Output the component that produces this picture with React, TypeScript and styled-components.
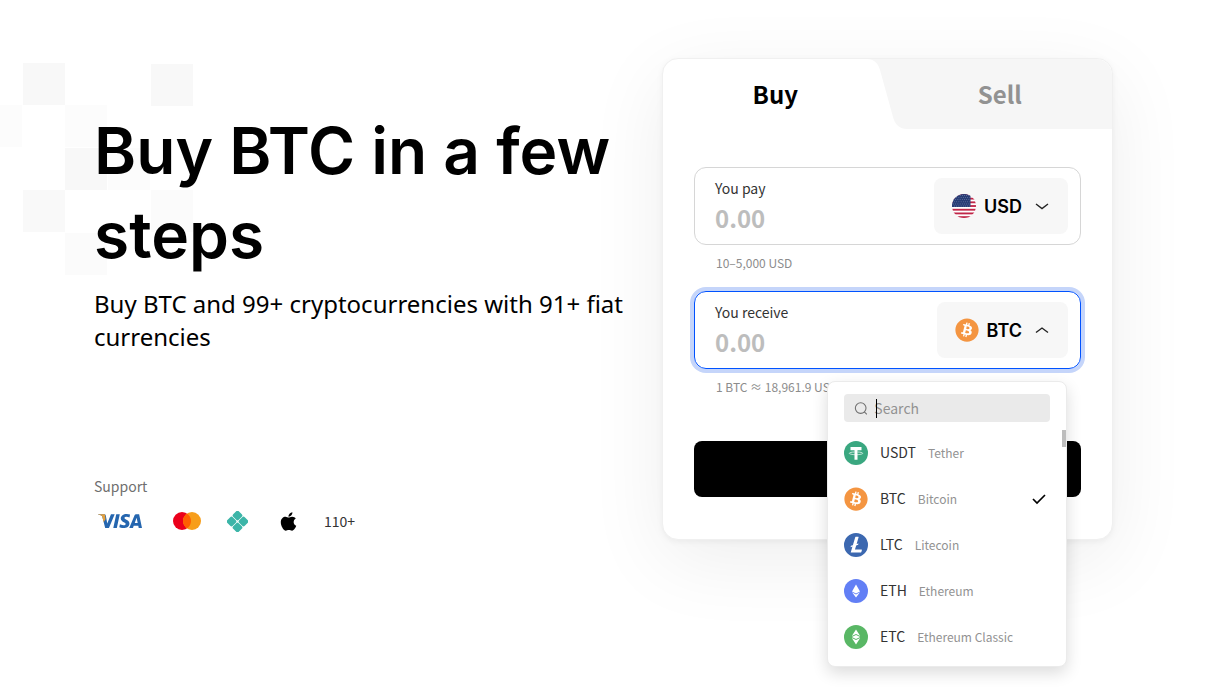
import React from 'react';
import styled, { createGlobalStyle, css } from 'styled-components';
import { SiVisa, SiLitecoin } from 'react-icons/si';
import { FaApple, FaBitcoin } from 'react-icons/fa';

const textFont = '"Noto Sans CJK SC", "Noto Sans", sans-serif';
const displayFont = 'Inter, "Noto Sans", sans-serif';

const GlobalStyle = createGlobalStyle`
  *, *::before, *::after { box-sizing: border-box; }
  body { margin: 0; background: #fff; color: #000; font-family: ${textFont}; }
  h1, p, ul { margin: 0; padding: 0; }
  button, input { font: inherit; border: 0; }
`;

const Page = styled.main`
  position: relative;
  display: grid;
  grid-template-columns: minmax(0, 1fr) minmax(0, 451px);
  gap: 32px;
  align-items: start;
  min-height: 100vh;
  padding: 58px 116px 20px 94px;
  overflow: hidden;
`;

const Pattern = styled.svg`
  position: absolute;
  left: 0;
  top: 63px;
`;

const Intro = styled.section`
  position: relative;
  padding-top: 51px;
`;

const Title = styled.h1`
  font-family: ${displayFont};
  font-size: 64px;
  font-weight: 600;
  line-height: 84px;
`;

const Lead = styled.p`
  margin-top: 10px;
  font-family: "Noto Sans", sans-serif;
  font-size: 24px;
  line-height: 33px;
`;

const SupportLabel = styled.p`
  margin-top: 123px;
  color: #6f6f6f;
  font-size: 14px;
  line-height: 20px;
`;

const Methods = styled.ul`
  display: flex;
  align-items: center;
  gap: 16px;
  height: 50px;
  list-style: none;
`;

const Method = styled.li<{ $wide?: boolean }>`
  display: flex;
  align-items: center;
  justify-content: ${p => (p.$wide ? 'flex-start' : 'center')};
  width: ${p => (p.$wide ? 59 : 35)}px;
  padding-left: ${p => (p.$wide ? 4 : 0)}px;
`;

const MoreMethods = styled.li`
  padding-left: 2px;
  color: #333;
  font-size: 14px;
`;

const VisaMark = styled.span`
  display: grid;
  color: #2566af;
  svg { grid-area: 1 / 1; }
  svg + svg { color: #e6a13c; clip-path: polygon(0 0, 13% 0, 17% 46%, 12% 54%, 0 48%); }
`;

const Card = styled.section`
  position: relative;
  border: 1px solid #f0f0f0;
  border-radius: 16px;
  background: #fff;
  box-shadow: 0 20px 80px rgba(0, 0, 0, 0.07), 0 2px 6px rgba(0, 0, 0, 0.05);
`;

const Tabs = styled.div`
  position: relative;
  display: grid;
  grid-template-columns: 1fr 1fr;
  height: 70px;
  border-radius: 16px 16px 0 0;
  overflow: hidden;
`;

const TabShape = styled.svg`
  position: absolute;
  right: 0;
  top: 0;
`;

const Tab = styled.button`
  position: relative;
  padding: 0;
  background: none;
  color: #929292;
  font-size: 24px;
  font-weight: 700;
  line-height: 32px;
  &[aria-selected='true'] { color: #000; }
`;

const Form = styled.form`
  padding: 38px 31px 42px;
`;

const FieldBox = styled.div<{ $active?: boolean }>`
  position: relative;
  display: flex;
  justify-content: space-between;
  height: 78px;
  padding: 10px 12px 10px 20px;
  border: 1px solid #d6d6d6;
  border-radius: 12px;
  ${p => p.$active && css`
    border-color: #0052ff;
    box-shadow: 0 0 0 4px #c5d5fa;
  `}
`;

const Amount = styled.label`
  display: flex;
  flex: 1;
  flex-direction: column;
  gap: 2px;
  min-width: 0;
  color: #333;
  font-size: 14px;
  line-height: 20px;
`;

const AmountInput = styled.input`
  width: 100%;
  height: 36px;
  padding: 0;
  outline: none;
  background: none;
  font-size: 24px !important;
  font-weight: 700 !important;
  &::placeholder { color: #bdbdbd; opacity: 1; }
`;

const CurrencyButton = styled.button`
  display: flex;
  align-items: center;
  gap: 8px;
  padding: 0 18px;
  border-radius: 8px;
  background: #f7f7f7;
  color: #000;
  font-family: ${displayFont};
  font-size: 18px;
  font-weight: 600;
  > svg:last-child { margin-left: 4px; }
`;

const Hint = styled.p`
  padding: 8px 22px 18px;
  color: #8c8c8c;
  font-size: 12px;
  line-height: 20px;
`;

const Submit = styled.button`
  display: block;
  width: 100%;
  height: 56px;
  margin-top: 26px;
  border-radius: 8px;
  background: #000;
`;

const Menu = styled.div`
  position: absolute;
  z-index: 2;
  top: 89px;
  right: 13px;
  width: 240px;
  padding: 12px 0 6px;
  border: 1px solid #ebebeb;
  border-radius: 8px;
  background: #fff;
  box-shadow: 0 6px 16px rgba(0, 0, 0, 0.14);
`;

const SearchBox = styled.label`
  position: relative;
  display: flex;
  align-items: center;
  gap: 7px;
  height: 28px;
  margin: 0 16px 8px;
  padding: 0 10px;
  border-radius: 4px;
  background: #eaeaea;
  color: #6f6f6f;
`;

const SearchInput = styled.input`
  width: 100%;
  padding: 0;
  outline: none;
  background: none;
  font-size: 14px !important;
  &::placeholder { color: #929292; opacity: 1; }
`;

const Caret = styled.span`
  position: absolute;
  left: 32px;
  top: 5px;
  width: 1px;
  height: 19px;
  background: #000;
`;

const Options = styled.ul`
  position: relative;
  list-style: none;
`;

const ScrollThumb = styled.span`
  position: absolute;
  top: 0;
  right: 0;
  width: 4px;
  height: 17px;
  background: #bdbdbd;
`;

const Option = styled.li`
  display: flex;
  align-items: center;
  gap: 12px;
  height: 46px;
  padding: 0 20px 0 16px;
`;

const Code = styled.span`
  padding-bottom: 2px;
  color: #333;
  font-size: 14px;
`;

const Name = styled.span`
  flex: 1;
  padding-bottom: 2px;
  color: #929292;
  font-size: 12px;
`;

const CoinDisc = styled.span<{ $color: string }>`
  display: flex;
  border-radius: 50%;
  background: radial-gradient(circle, #fff 9px, transparent 10px);
  color: ${p => p.$color};
`;

const Bitcoin = () => <CoinDisc $color="#f49541"><FaBitcoin size={24} /></CoinDisc>;
const Litecoin = () => <CoinDisc $color="#3c68b0"><SiLitecoin size={24} /></CoinDisc>;

const Tether = () => (
  <svg width="24" height="24" viewBox="0 0 24 24" aria-hidden="true">
    <circle cx="12" cy="12" r="12" fill="#3aa780" />
    <path d="M6.500 6h11v3.200h-4v9.600h-3V9.200h-4z" fill="#fff" />
    <path d="M10.500 11C7.500 11.100 5.300 11.600 5.300 12.300s2.800 1.400 6.700 1.400 6.700-.7 6.700-1.400-2.200-1.200-5.200-1.300" fill="none" stroke="#fff" strokeWidth=".7" />
  </svg>
);

const Ethereum = () => (
  <svg width="24" height="24" viewBox="0 0 24 24" aria-hidden="true">
    <circle cx="12" cy="12" r="12" fill="#627ff5" />
    <path d="M12 5.500l4 6.900-4 2.200-4-2.200z" fill="#fff" />
    <path d="M8 13.200l4 2.200 4-2.200-4 5.300z" fill="#fff" />
  </svg>
);

const EthereumClassic = () => (
  <svg width="24" height="24" viewBox="0 0 24 24" aria-hidden="true">
    <circle cx="12" cy="12" r="12" fill="#59b765" />
    <path d="M12 4.500l4.200 6.500-4.200-2-4.200 2z" fill="#fff" />
    <path d="M12 9.900l4.200 2.100-4.200 2.100-4.200-2.100z" fill="#fff" />
    <path d="M12 19.500l-4.200-6.500 4.200 2 4.200-2z" fill="#fff" />
  </svg>
);

const Flag = () => (
  <svg width="24" height="24" viewBox="0 0 24 24" aria-hidden="true">
    <clipPath id="flag-disc"><circle cx="12" cy="12" r="12" /></clipPath>
    <g clipPath="url(#flag-disc)">
      <rect width="24" height="24" fill="#fff" />
      {[0, 1, 2, 3, 4, 5, 6].map(i => <rect key={i} y={i * 3.7} width="24" height="1.85" fill="#c02648" />)}
      <rect width="18.500" height="13" fill="#273c75" />
      {[0, 1, 2, 3, 4, 5].map(r => [0, 1, 2, 3, 4, 5, 6, 7].map(c => (
        <circle key={`${r}-${c}`} cx={1.5 + c * 2.2 + (r % 2)} cy={1.5 + r * 2.1} r=".4" fill="#a9b2cf" />
      )))}
    </g>
  </svg>
);

const Chevron = ({ up = false }: { up?: boolean }) => (
  <svg width="16" height="16" viewBox="0 0 16 16" fill="none" stroke="#222" strokeWidth="1.400" aria-hidden="true">
    <path d={up ? 'M2 10.500L8 6l6 4.500' : 'M2 6l6 4.500L14 6'} />
  </svg>
);

const Check = () => (
  <svg width="14" height="12" viewBox="0 0 14 12" fill="none" stroke="#000" strokeWidth="1.700" aria-hidden="true">
    <path d="M1 6l4 4 8-8" />
  </svg>
);

const Magnifier = () => (
  <svg width="15" height="15" viewBox="0 0 15 15" fill="none" stroke="currentColor" strokeWidth="1.200" aria-hidden="true">
    <circle cx="7.500" cy="7" r="6" />
    <path d="M11.600 11.200l2.900 2.900" />
  </svg>
);

const Mastercard = () => (
  <svg width="28" height="18" viewBox="0 0 28 18" role="img" aria-label="Mastercard">
    <circle cx="9" cy="9" r="9" fill="#eb001b" />
    <circle cx="19" cy="9" r="9" fill="#f79e1b" />
    <path d="M14 1.520a9 9 0 0 1 0 14.960a9 9 0 0 1 0-14.960z" fill="#ff5f00" />
  </svg>
);

const Pix = () => (
  <svg width="21" height="21" viewBox="0 0 21 21" fill="#3cb5a8" role="img" aria-label="Pix">
    <g transform="rotate(45 10.500 10.500)">
      <rect x="2.300" y="2.300" width="7.900" height="7.900" rx="1.800" />
      <rect x="10.800" y="2.300" width="7.900" height="7.900" rx="1.800" />
      <rect x="2.300" y="10.800" width="7.900" height="7.900" rx="1.800" />
      <rect x="10.800" y="10.800" width="7.900" height="7.900" rx="1.800" />
    </g>
  </svg>
);

const squares: [number, number, string][] = [
  [23, 0, '#f8f8f8'], [151, 1, '#f8f8f8'], [-20, 42, '#fcfcfc'], [65, 42, '#fcfcfc'],
  [65, 85, '#f8f8f8'], [108, 85, '#fcfcfc'], [23, 127, '#f9f9f9'], [151, 127, '#fbfbfb'], [65, 170, '#fbfbfb'],
];

const coins = [
  { code: 'USDT', name: 'Tether', Icon: Tether },
  { code: 'BTC', name: 'Bitcoin', Icon: Bitcoin, selected: true },
  { code: 'LTC', name: 'Litecoin', Icon: Litecoin },
  { code: 'ETH', name: 'Ethereum', Icon: Ethereum },
  { code: 'ETC', name: 'Ethereum Classic', Icon: EthereumClassic },
];

export default function App() {
  return (
    <Page>
      <GlobalStyle />
      <Pattern width="200" height="214" aria-hidden="true">
        {squares.map(([x, y, fill]) => <rect key={`${x}-${y}`} x={x} y={y} width="42" height="42" fill={fill} />)}
      </Pattern>
      <Intro>
        <Title>Buy BTC in a few steps</Title>
        <Lead>Buy BTC and 99+ cryptocurrencies with 91+ fiat currencies</Lead>
        <SupportLabel>Support</SupportLabel>
        <Methods>
          <Method $wide><VisaMark role="img" aria-label="Visa"><SiVisa size={44} /><SiVisa size={44} /></VisaMark></Method>
          <Method><Mastercard /></Method>
          <Method><Pix /></Method>
          <Method><FaApple size={21} aria-label="Apple Pay" /></Method>
          <MoreMethods>110+</MoreMethods>
        </Methods>
      </Intro>
      <Card>
        <Tabs role="tablist">
          <TabShape width="245" height="70" viewBox="0 0 245 70" aria-hidden="true">
            <path d="M0 0c7 0 11 4 13 11l13 47c2 8 7 12 14 12h205V0z" fill="#f6f6f6" />
          </TabShape>
          <Tab type="button" role="tab" aria-selected="true">Buy</Tab>
          <Tab type="button" role="tab" aria-selected="false">Sell</Tab>
        </Tabs>
        <Form>
          <FieldBox>
            <Amount>You pay<AmountInput placeholder="0.00" inputMode="decimal" /></Amount>
            <CurrencyButton type="button"><Flag />USD<Chevron /></CurrencyButton>
          </FieldBox>
          <Hint>10–5,000 USD</Hint>
          <FieldBox $active>
            <Amount>You receive<AmountInput placeholder="0.00" inputMode="decimal" /></Amount>
            <CurrencyButton type="button" aria-expanded="true"><Bitcoin />BTC<Chevron up /></CurrencyButton>
            <Menu>
              <SearchBox>
                <Magnifier />
                <SearchInput type="text" placeholder="Search" aria-label="Search" />
                <Caret />
              </SearchBox>
              <Options role="listbox">
                {coins.map(({ code, name, Icon, selected }) => (
                  <Option key={code} role="option" aria-selected={!!selected}>
                    <Icon />
                    <Code>{code}</Code>
                    <Name>{name}</Name>
                    {selected && <Check />}
                  </Option>
                ))}
                <ScrollThumb />
              </Options>
            </Menu>
          </FieldBox>
          <Hint>1 BTC ≈ 18,961.9 USD</Hint>
          <Submit type="submit" aria-label="Buy BTC" />
        </Form>
      </Card>
    </Page>
  );
}
